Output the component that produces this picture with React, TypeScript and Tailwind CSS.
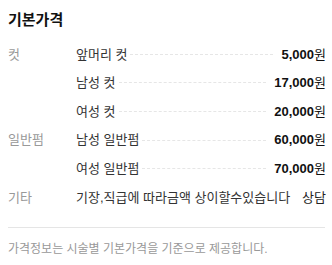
import React from 'react';

type Item = { name: string; price?: string; note?: string };
type Group = { category: string; items: Item[] };

const groups: Group[] = [
  {
    category: '컷',
    items: [
      { name: '앞머리 컷', price: '5,000' },
      { name: '남성 컷', price: '17,000' },
      { name: '여성 컷', price: '20,000' },
    ],
  },
  {
    category: '일반펌',
    items: [
      { name: '남성 일반펌', price: '60,000' },
      { name: '여성 일반펌', price: '70,000' },
    ],
  },
  {
    category: '기타',
    items: [{ name: '기장,직급에 따라금액 상이할수있습니다', note: '상담' }],
  },
];

const font = { fontFamily: '"Liberation Sans", "Noto Sans CJK KR", sans-serif' };

export default function App() {
  return (
    <div className="w-[332px] h-[265px] bg-white pl-2 pr-[6px] pt-[10px]" style={font}>
      <h2 className="text-[15px] font-bold text-[#111] leading-5">기본가격</h2>

      <div className="mt-[10px] flex flex-col">
        {groups.map((g) => (
          <div key={g.category} className="flex">
            <div className="w-[68px] shrink-0 h-[28.6px] flex items-center text-[13px] text-[#999]">
              {g.category}
            </div>
            <div className="flex-1 flex flex-col">
              {g.items.map((it) => (
                <div key={it.name} className="h-[28.6px] flex items-center text-[13px]">
                  <span className="text-[#333] whitespace-nowrap">{it.name}</span>
                  {it.price ? (
                    <>
                      <span className="flex-1 ml-[3px] mr-[8px] border-t border-dashed border-[#e6e6e6]" />
                      <span className="text-[#111] whitespace-nowrap">
                        <span className="font-bold">{it.price}</span>원
                      </span>
                    </>
                  ) : (
                    <>
                      <span className="flex-1" />
                      <span className="text-[#222] whitespace-nowrap">{it.note}</span>
                    </>
                  )}
                </div>
              ))}
            </div>
          </div>
        ))}
      </div>

      <div className="mt-[15px] border-t border-[#e5e5e5] mr-[1px]" />
      <p className="mt-[13px] text-[12px] text-[#999] leading-4">가격정보는 시술별 기본가격을 기준으로 제공합니다.</p>
    </div>
  );
}
